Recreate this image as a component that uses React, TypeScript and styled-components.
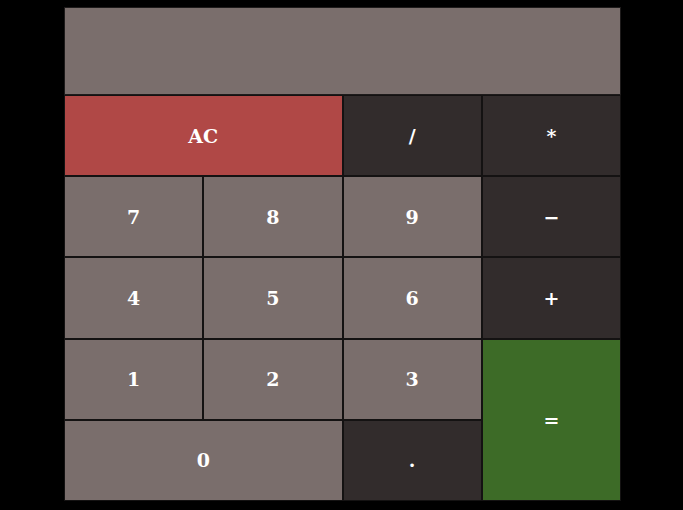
import React from 'react';
import styled, { createGlobalStyle } from 'styled-components';

const GlobalStyle = createGlobalStyle`
  html, body {
    margin: 0;
    padding: 0;
    background: #000000;
  }
`;

const Calculator = styled.div`
  width: 557px;
  margin: 7px 0 0 64px;
  display: flex;
  flex-direction: column;
`;

const Display = styled.div`
  height: 86px;
  background: #7a6e6c;
  border: 1px solid #1e1b1b;
`;

const Keys = styled.div`
  display: grid;
  grid-template-columns: repeat(4, 1fr);
  grid-template-rows: repeat(5, 81.2px);
`;

type Tone = 'light' | 'dark' | 'red' | 'green';

const toneColors: Record<Tone, string> = {
  light: '#7a6e6c',
  dark: '#322c2c',
  red: '#b04846',
  green: '#3d6b27',
};

const Key = styled.button<{ $tone: Tone; $wide?: boolean; $tall?: boolean }>`
  grid-column: span ${p => (p.$wide ? 2 : 1)};
  grid-row: span ${p => (p.$tall ? 2 : 1)};
  background: ${p => toneColors[p.$tone]};
  border: 1px solid #141212;
  margin: 0;
  padding: 0;
  color: #ffffff;
  font-family: 'DejaVu Serif', 'Liberation Serif', serif;
  font-weight: bold;
  font-size: 19px;
  display: flex;
  align-items: center;
  justify-content: center;
  cursor: pointer;
`;

const keys: { label: string; tone: Tone; wide?: boolean; tall?: boolean }[] = [
  { label: 'AC', tone: 'red', wide: true },
  { label: '/', tone: 'dark' },
  { label: '*', tone: 'dark' },
  { label: '7', tone: 'light' },
  { label: '8', tone: 'light' },
  { label: '9', tone: 'light' },
  { label: '−', tone: 'dark' },
  { label: '4', tone: 'light' },
  { label: '5', tone: 'light' },
  { label: '6', tone: 'light' },
  { label: '+', tone: 'dark' },
  { label: '1', tone: 'light' },
  { label: '2', tone: 'light' },
  { label: '3', tone: 'light' },
  { label: '=', tone: 'green', tall: true },
  { label: '0', tone: 'light', wide: true },
  { label: '.', tone: 'dark' },
];

export default function App() {
  return (
    <>
      <GlobalStyle />
      <Calculator>
        <Display />
        <Keys>
          {keys.map(k => (
            <Key key={k.label} $tone={k.tone} $wide={k.wide} $tall={k.tall}>
              {k.label}
            </Key>
          ))}
        </Keys>
      </Calculator>
    </>
  );
}
